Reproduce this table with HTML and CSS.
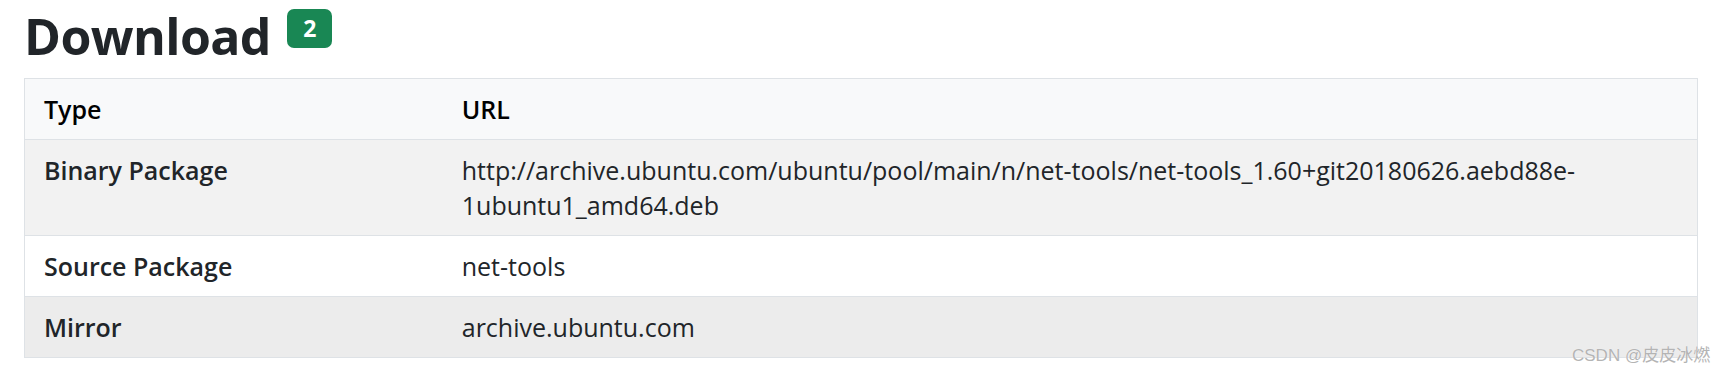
FILE: index.html
```html
<!DOCTYPE html>
<html lang="en">
<head>
    <meta charset="UTF-8">
    <meta name="viewport" content="width=device-width, initial-scale=1.0">
    <title>Download</title>
    <link rel="stylesheet" href="styles.css">
</head>
<body>
    <main class="page">
        <h1 class="title">Download <span class="badge">2</span></h1>
        <table class="downloads">
            <thead>
                <tr>
                    <th class="col-type">Type</th>
                    <th>URL</th>
                </tr>
            </thead>
            <tbody>
                <tr class="row-a">
                    <th>Binary Package</th>
                    <td>http://archive.ubuntu.com/ubuntu/pool/main/n/net-tools/net-tools_1.60+git20180626.aebd88e-<wbr>1ubuntu1_amd64.deb</td>
                </tr>
                <tr class="row-b">
                    <th>Source Package</th>
                    <td>net-tools</td>
                </tr>
                <tr class="row-c">
                    <th>Mirror</th>
                    <td>archive.ubuntu.com</td>
                </tr>
            </tbody>
        </table>
        <div class="watermark">CSDN @皮皮冰燃</div>
    </main>
</body>
</html>
```

FILE: styles.css
```css
html, body {
    margin: 0;
    padding: 0;
    box-sizing: border-box;
}

body {
    font-family: "Open Sans", "Noto Sans", "Noto Sans CJK SC", sans-serif;
    color: #212529;
    background-color: #fff;
}

.page {
    padding: 0 26px 0 24px;
}

.title {
    margin: 0;
    height: 78px;
    font-size: 50px;
    font-weight: 700;
    line-height: 72px;
    letter-spacing: -0.6px;
}

.badge {
    display: inline-block;
    vertical-align: top;
    margin-top: 9px;
    margin-left: 4px;
    padding: 8px 16px;
    font-size: 23px;
    line-height: 23px;
    font-weight: 700;
    letter-spacing: 0;
    color: #fff;
    background-color: #198754;
    border-radius: 7px;
}

.downloads {
    width: 100%;
    border-collapse: collapse;
    border: 1px solid #dee2e6;
    font-size: 25px;
    line-height: 35px;
}

.downloads th,
.downloads td {
    padding: 13px 19px 12px;
    text-align: left;
    vertical-align: top;
    border-top: 1px solid #dee2e6;
}

.downloads th {
    font-weight: 600;
    color: #000;
}

.downloads tbody th {
    color: #212529;
}

.downloads td {
    font-weight: 400;
}

.col-type {
    width: 25%;
}

.downloads thead tr {
    background-color: #f8f9fa;
}

.row-a {
    background-color: #f2f2f2;
}

.row-b {
    background-color: #fff;
}

.row-c {
    background-color: #ececec;
}

.watermark {
    position: absolute;
    left: 1572px;
    top: 341px;
    font-family: "Liberation Sans", "Noto Sans CJK SC", sans-serif;
    font-size: 17px;
    color: #b4b4b4;
    text-shadow: 0 0 1px #fff;
}
```
